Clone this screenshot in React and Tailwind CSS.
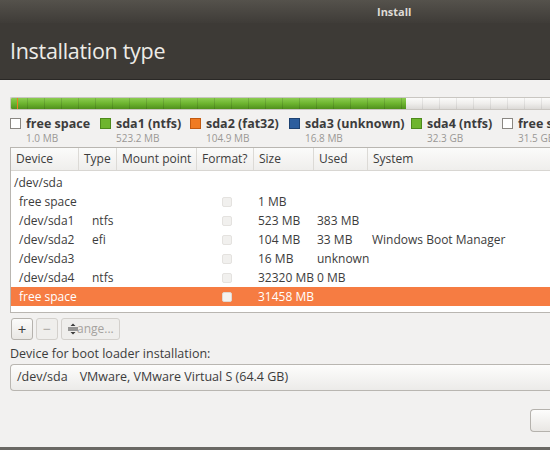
import { useState } from "react";

const legend = [
  { label: "free space", size: "1.0 MB", box: "bg-white border-[#8a8782]", w: "w-[90px]" },
  { label: "sda1 (ntfs)", size: "523.2 MB", box: "bg-[#6eb52e] border-[#4d8a1b]", w: "w-[90px]" },
  { label: "sda2 (fat32)", size: "104.9 MB", box: "bg-[#f07b22] border-[#c25a10]", w: "w-[99px]" },
  { label: "sda3 (unknown)", size: "16.8 MB", box: "bg-[#2c5e9e] border-[#1d4272]", w: "w-[122px]" },
  { label: "sda4 (ntfs)", size: "32.3 GB", box: "bg-[#6eb52e] border-[#4d8a1b]", w: "w-[91px]" },
  { label: "free space", size: "31.5 GB", box: "bg-white border-[#8a8782]", w: "w-[90px]" },
];

const rows = [
  { dev: "free space", type: "", size: "1 MB", used: "", sys: "" },
  { dev: "/dev/sda1", type: "ntfs", size: "523 MB", used: "383 MB", sys: "" },
  { dev: "/dev/sda2", type: "efi", size: "104 MB", used: "33 MB", sys: "Windows Boot Manager" },
  { dev: "/dev/sda3", type: "", size: "16 MB", used: "unknown", sys: "" },
  { dev: "/dev/sda4", type: "ntfs", size: "32320 MB", used: "0 MB", sys: "" },
  { dev: "free space", type: "", size: "31458 MB", used: "", sys: "" },
];

const cols = "grid grid-cols-[68px_38px_80px_57px_60px_54px_1fr]";

function Check({ selected }) {
  return (
    <span
      className={
        selected
          ? "block w-[10px] h-[10px] rounded-[2px] border border-[#e0d8d2] bg-[#f4f2f0]"
          : "block w-[10px] h-[10px] rounded-[2px] border border-[#e4e2df] bg-[#f1f0ee]"
      }
    />
  );
}

export default function App() {
  const [sel, setSel] = useState(5);

  return (
    <div className="w-[550px] h-[450px] overflow-hidden bg-[#f2f1f0] flex flex-col text-[#3c3c3c] font-['Open_Sans','Noto_Sans',sans-serif]">
      {/* title bar + header */}
      <div className="h-[80px] shrink-0 bg-[#3d3a36] flex flex-col border-b border-[#2a2826]">
        <div className="h-[23px] shrink-0 bg-gradient-to-b from-[#55524c] to-[#3f3c38] flex items-center pl-[377px]">
          <span className="text-[11px] font-bold text-[#dedbd6] leading-none">Install</span>
        </div>
        <div className="flex-1 flex items-center px-[10px]">
          <h1 className="text-[21.5px] text-[#eeece8] leading-none tracking-[-0.3px]">Installation type</h1>
        </div>
      </div>

      <div className="flex-1 flex flex-col pl-[10px]">
        {/* partition bar */}
        <div className="mt-[17px] h-[13px] flex rounded-l-[2px] overflow-hidden border-y border-l border-[#c9c6c1]">
          <div className="w-[395px] relative bg-gradient-to-b from-[#8ccd50] via-[#6db42f] to-[#50901d]">
            <div className="absolute inset-0 bg-[repeating-linear-gradient(90deg,transparent_0_16px,rgba(0,0,0,0.12)_16px_17px)]" />
            <div className="absolute left-[6px] top-0 bottom-0 w-[1px] bg-[#f07b22]" />
          </div>
          <div className="flex-1 relative bg-gradient-to-b from-[#fbfbfa] via-[#efeeec] to-[#dcdad7]">
            <div className="absolute inset-0 bg-[repeating-linear-gradient(90deg,transparent_0_16px,rgba(0,0,0,0.07)_16px_17px)]" />
          </div>
        </div>

        {/* legend */}
        <div className="flex mt-[5px] whitespace-nowrap">
          {legend.map((l, i) => (
            <div key={i} className={`${l.w} shrink-0 flex gap-[5px]`}>
              <span className={`mt-[3px] w-[11px] h-[11px] shrink-0 border ${l.box}`} />
              <div className="flex flex-col">
                <span className="text-[12.5px] font-bold leading-[17px] text-[#3c3c3c]">{l.label}</span>
                <span className="text-[10px] leading-[12px] text-[#9a9895]">{l.size}</span>
              </div>
            </div>
          ))}
        </div>

        {/* table */}
        <div className="mt-[3px] h-[166px] bg-white border border-r-0 border-[#b9b6b1] flex flex-col text-[12px] whitespace-nowrap">
          <div className={`${cols} h-[23px] shrink-0 items-stretch border-b border-[#d8d6d2] bg-gradient-to-b from-[#fbfbfa] to-[#efeeec]`}>
            {["Device", "Type", "Mount point", "Format?", "Size", "Used", "System"].map((h, i) => (
              <div key={h} className={`flex items-center px-[5px] ${i < 6 ? "border-r border-[#dcdad6]" : ""}`}>
                {h}
              </div>
            ))}
          </div>
          <div className="h-[19px] flex items-center px-[3px] mt-[2px]">/dev/sda</div>
          {rows.map((r, i) => {
            const on = sel === i;
            return (
              <div
                key={i}
                onClick={() => setSel(i)}
                className={`${cols} h-[19px] items-center ${on ? "bg-[#f67c42] text-white" : ""}`}
              >
                <div className="pl-[8px]">{r.dev}</div>
                <div className="pl-[13px]">{r.type}</div>
                <div />
                <div className="pl-[25px] flex">
                  <Check selected={on} />
                </div>
                <div className="pl-[4px]">{r.size}</div>
                <div className="pl-[3px]">{r.used}</div>
                <div className="pl-[4px]">{r.sys}</div>
              </div>
            );
          })}
        </div>

        {/* buttons */}
        <div className="flex gap-[3px] mt-[5px] ml-[1px] text-[12px]">
          <button className="w-[22px] h-[22px] rounded-[3px] border border-[#b5b2ad] bg-gradient-to-b from-[#fbfbfa] to-[#e9e7e4] flex items-center justify-center text-[15px] leading-none text-[#3c3c3c]">
            +
          </button>
          <button className="w-[22px] h-[22px] rounded-[3px] border border-[#d3d0cc] bg-[#efeeec] flex items-center justify-center text-[14px] leading-none text-[#a5a29e]">
            −
          </button>
          <button className="h-[22px] px-[5px] rounded-[3px] border border-[#d3d0cc] bg-[#efeeec] flex items-center gap-[1px] text-[#a5a29e]">
            <svg width="12" height="12" viewBox="0 0 12 12" className="text-[#3c3c3c]">
              <path d="M1 5h10M1 7h10" stroke="currentColor" strokeWidth="1" />
              <path d="M6 0.5L3.5 3h5z M6 11.5L3.5 9h5z" fill="currentColor" />
            </svg>
            <span className="-ml-[3px]">ange...</span>
          </button>
        </div>

        <div className="mt-[6px] text-[12.5px] leading-[16px] text-[#3c3c3c]">Device for boot loader installation:</div>

        <div className="mt-[2px] h-[27px] rounded-l-[4px] border border-r-0 border-[#b9b6b1] bg-gradient-to-b from-[#fdfdfc] to-[#ecebe9] flex items-center px-[6px] text-[12.5px] whitespace-nowrap">
          <span>/dev/sda</span>
          <span className="ml-[12px]">VMware, VMware Virtual S (64.4 GB)</span>
        </div>

        <div className="flex justify-end mt-[18px]">
          <div className="w-[20px] h-[23px] rounded-l-[4px] border border-r-0 border-[#b5b2ad] bg-gradient-to-b from-[#fdfdfc] to-[#e9e7e4]" />
        </div>
      </div>
      <div className="h-[3px] shrink-0 bg-[#6a6864]" />
    </div>
  );
}
